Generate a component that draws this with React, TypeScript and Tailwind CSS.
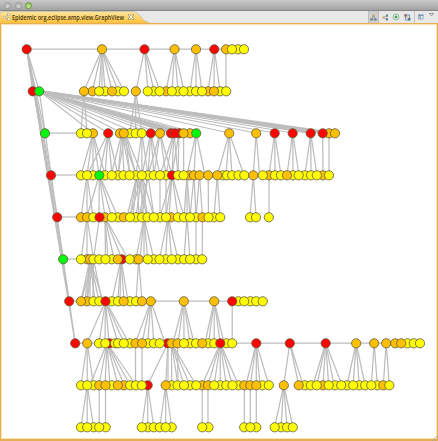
import React from 'react';

type Fill = 'R' | 'G' | 'O' | 'Y';

const FILLS: Record<Fill, string> = {
  R: '#fe0505',
  G: '#05f80b',
  O: '#ffbf05',
  Y: '#fffc05',
};

// Each row is a list of nodes: colour, x, and a trailing "-" for nodes painted below their neighbours.
const ROWS: { y: number; nodes: string }[] = [
  { y: 49, nodes: 'R26.7 O102 R144.5 O174.6 O196 R214.3 O226- Y232 Y238- Y244' },
  { y: 91, nodes: 'R32.7- G39.2 O84 O92.5- Y99.2 Y105- O112 Y117.8- Y124 O135.8 Y147.7 Y153.7- Y159.6 O166- Y171.8 Y177.7- Y183.6 Y189.7- Y196- Y202 O208- O214 Y220- Y226.2' },
  { y: 133, nodes: 'G45 Y81- Y87 O93- R108.2 O120- O123.8 Y130- Y135.6 Y141.8 R150.8 O160 R171- R179- R174.8 O183.6 O190- G196.2 O229.2 O256.2 R274.7 R292.7 R310.7 R322.7 O329- O335-' },
  { y: 175, nodes: 'R51 Y81- Y87 Y93- G99.3 Y105- Y111.8 Y118- Y123.5 Y129.6 Y135.7- Y141.8 Y147.8- Y153.8 Y160 Y166- R172- Y178- Y183.6 O189- O194- O199.5 O208.2 O217.3 Y223- Y227- Y232.2 Y238.5 Y244.3 O253.3 Y262.8 O269- Y275- Y281- O287 Y293- Y298.7 Y305- Y311- Y316.8 O323- Y329' },
  { y: 217, nodes: 'R57.2 O81- O87 Y93.3 R99.5 O105- Y111.8 Y118- O123.7 Y130 Y136- Y142- Y147.5 Y153.8 Y160- O171- Y166 Y178- Y184- Y190 Y196- O202.5- Y208.5 Y214- Y220.2 Y250- Y256 Y268.8' },
  { y: 259, nodes: 'G63.2 Y81 O87- O90- Y93.5- Y99.3 Y105.5 Y111.8- R122- O117.8 Y129.8 Y136- O138.7 Y147.7 Y153.8- Y159.5 Y165.6- Y171.7 Y178- Y184- Y190 Y196- Y202.2-' },
  { y: 301, nodes: 'R69.2 O81 O87- Y93.5- Y99.3 R105.5 Y111.8- Y118- O123.7 Y130- Y136- O142- O150.8 O183.8 O214.2 R232.2 Y238.5- Y244.2 Y250.5- Y256.2- Y262.8' },
  { y: 343, nodes: 'R75.2 O87.2 Y99- R109.5- Y105.3 Y115- Y118- Y123.8 Y130- O135.5- O142 Y147.7- Y153.8- Y159.7 R167.5- O171.5- O177.5- Y184 Y190- Y196- O202.2 Y208.5- Y214.2- R220.3 Y226.5- Y232.2 R256.3 R289.8 R325.7 O356.2 O374.2 O386.2 O395.2 O401.2 Y407.5- Y413.8 Y420' },
  { y: 385, nodes: 'Y81- Y87.2 Y93.5- O99.2 O105.5 Y111.8- O117.8 O123.8- Y130- Y135.8- Y141.8 R147.7- O165.7 Y171.7- Y177.5- Y184 Y190- Y196.2 O202.2- O208 Y214.2 Y220.2- Y226.3 Y232.5 Y238.5- O244.3- O250.3 O256.3 Y262.5- Y268.8 O283.8 O298.7 Y305- Y310.8- Y316.7 O323- Y328.7 Y335- Y341.2 Y347- Y353.2 Y359.2- Y365.2- Y371.3 Y377.3- O383.3- Y389.3' },
  { y: 427, nodes: 'Y81- Y87.2 Y93.5- Y99.2 Y105.7- Y141.8 Y147.8- Y153.8- Y159.8- Y165.7 Y171.7- Y202.2 Y208.5- Y244.2- Y250.3 Y256.3- Y274.7 Y281- Y287- Y292.8' },
];

// Child links between row n and row n + 1, written as parent:child,child
const LINKS: string[] = [
  '102:84,92.5,99,102,105,112,118,124 144.5:136,148,154,160 174.6:166,172,178,184 196:190,196,202 214.3:208,214,220 226:226',
  '84:81,87 135.8:130,135.6,141.8',
  '93:81,87,93,99,105 108.2:87,99,105,112,118 122:111,118,124,130,136 125:118,130,136,142 141.8:136,142,148 150.8:142,148,154,160 160:148,154,166,172 174:160,166,172,178 179:172,178 183.6:183.6 196.2:187,194,205 229.2:217.5,226,232,244 256.2:253.3,259.5 274.7:269,275,281 292.7:287,293,299 310.7:305,311,317 322.7:323 329:329',
  '87:81,87,93 99.3:87,99,105,111.8,118 137:127,130,133,139,147 141.8:130,136,142,147.5,154 148:139,142,154 160:160 172:160,166,169,178,184 166:166 187:184,187,190 194:190,196 199.5:196,202.5 208.2:208.5 217.3:214,220 253.3:250,256 269:269',
  '87:81,87,93.5 99.5:93.5 105:105.5,108,114,122,128 144:136,140,144,147.7,153.8 168:159.5,165.6,171.7,178 187:184,190 196:196 202.5:202.2',
  '90:81,85,87,90,95,99,103 93.5:81,87,93,102 121:111.8,117.8,120,124,128 138.7:136,142',
  '105.5:87.2,99,105,109,118,124,129 150.8:135.5,142,147.7,153.8,165 183.8:173,178,184,190,194 214.2:205,208.5,214.2,220.3,224 232.2:232.2',
  '87.2:81,87.2,93.5 107:90,99,105,110,118,124,130,136 135.5:135.5 142:142 168:147.7,165.7,168 171.5:171.7,178,184,190,196 177.5:178 220.3:202.2,208,214.2,220.2,226.3,232.5,238.5 256.3:246,250.3,256.3,260,268.8 289.8:283.8,298.7,303 325.7:313,317,323,328.7,334,342 356.2:347,353.2,359.2,365 374.2:371.3,377.3 386.2:383.3,389.3',
  '87.2:81,87.2,93.5 99.2:99.2 105.5:105.5 147.7:141.8,147.7,153.8 165.7:159.8,165.7,171.7 202.2:202.2 208:208 244.3:244.3 250.3:250.3 256.3:256.3 283.8:274.7,281,287,292.8',
];

// Horizontal connectors that join siblings
const CHAINS: [number, number, number][] = [
  [26.7, 49, 244],
  [45, 133, 93],
  [51, 175, 81],
  [57, 217, 81],
  [63, 259, 81],
  [69, 301, 262],
  [75, 343, 420],
];

const LEADERS: [number, number][] = [
  [32.7, 91], [39.2, 91], [45, 133], [51, 175], [57.2, 217], [63.2, 259], [69.2, 301], [75.2, 343],
];

const THIN_FAN = [93, 108.2, 122, 136, 150.8, 160, 190, 196.2, 229.2, 256.2, 274.7, 292.7];
const WIDE_FAN = [171, 175, 180, 183.6, 310.7, 322.7, 329, 335];

function Links() {
  return (
    <g stroke="#bdbdbd" strokeWidth="1.25" fill="none">
      {LEADERS.map(([x, y], i) => (
        <path key={i} d={`M26.7 49L${x} ${y}`} />
      ))}
      <path d="M39.2 91L75.2 343" />
      {THIN_FAN.map((x) => (
        <path key={x} strokeWidth="1.1" d={`M39.2 91L${x} 133`} />
      ))}
      {WIDE_FAN.map((x) => (
        <path key={x} strokeWidth="2" d={`M39.2 91L${x} 133`} />
      ))}
      {CHAINS.map(([x, y, end], i) => (
        <path key={i} d={`M${x} ${y}H${end}`} />
      ))}
      {LINKS.map((row, i) =>
        row.split(' ').map((group) => {
          const [from, to] = group.split(':');
          return to.split(',').map((x) => (
            <path key={`${group}-${x}`} d={`M${from} ${49 + i * 42}L${x} ${91 + i * 42}`} />
          ));
        }),
      )}
    </g>
  );
}

function Nodes() {
  return (
    <g stroke="#5e5a38" strokeWidth="0.8">
      {ROWS.map(({ y, nodes }) => {
        const list = nodes.split(' ');
        const ordered = [...list.filter((n) => n.endsWith('-')), ...list.filter((n) => !n.endsWith('-'))];
        return ordered.map((n) => (
          <circle key={`${y}-${n}`} cx={parseFloat(n.slice(1))} cy={y + 0.3} r="4.6" fill={FILLS[n[0] as Fill]} />
        ));
      })}
    </g>
  );
}

function Light({ active = false }: { active?: boolean }) {
  return (
    <span
      className={
        active
          ? 'size-[7px] rounded-full border border-[#6a9440] bg-linear-to-b from-[#8fc060] to-[#c8f58a]'
          : 'size-[7px] rounded-full border border-[#9a9a9a] bg-linear-to-b from-[#b4b4b4] to-[#d8d8d8]'
      }
    />
  );
}

function Toolbar() {
  return (
    <div className="ml-auto flex h-full items-center">
      <div className="flex h-full w-[11px] items-center justify-center border-x border-[#bcbcbc] bg-[#cfcfcf]">
        <svg className="size-[7px]" viewBox="0 0 7 7">
          <path d="M3.5 2L1.3 5.5M3.5 2L5.7 5.5M1 5.7H6" stroke="#787e83" strokeWidth=".8" />
          <rect x="2.5" y=".5" width="2" height="2" fill="#c49c5b" />
          <rect x=".3" y="4.5" width="2" height="2" fill="#65877a" />
          <rect x="4.6" y="4.5" width="2" height="2" fill="#5f7794" />
        </svg>
      </div>
      <svg className="ml-[3px] size-[7px]" viewBox="0 0 7 7">
        <path d="M1.5 3.5L5 1.3M1.5 3.5L5 5.8" stroke="#888" strokeWidth=".7" />
        <rect x=".3" y="2.5" width="2" height="2" fill="#c5a268" />
        <rect x="4" y=".5" width="2" height="2.2" fill="#558b69" />
        <rect x="4" y="4.2" width="2" height="2.2" fill="#607b9b" />
      </svg>
      <svg className="ml-[3px] size-[8px]" viewBox="0 0 8 8">
        <circle cx="4" cy="4" r="3" fill="#e7f0e7" stroke="#7db08b" strokeWidth=".8" />
        <circle cx="4" cy="4" r="1.4" fill="#4b9b61" />
      </svg>
      <svg className="ml-[4px] size-[7px]" viewBox="0 0 7 7">
        <path d="M2 1H5.5V4M5 6H1.5V3" fill="none" stroke="#557fae" strokeWidth=".8" />
        <rect x=".3" y=".3" width="2.2" height="2.4" fill="#8a5c50" />
        <rect x="4.2" y="4" width="2.3" height="2.5" fill="#4b6b91" />
        <rect x="2.5" y="2.5" width="1.8" height="1.8" fill="#e2b98c" />
      </svg>
      <span className="ml-[3px] h-full w-px bg-[#c2c2c2]" />
      <svg className="ml-[3px] size-[6px]" viewBox="0 0 6 6">
        <rect x=".5" y=".8" width="4.6" height="4.2" fill="#dfe8ef" stroke="#7e95aa" strokeWidth=".6" />
        <path d="M.3 1.3H5.3M2 1.3V5" stroke="#537699" strokeWidth=".8" />
      </svg>
      <svg className="mr-[4px] mb-[4px] ml-[5px] h-[4px] w-[5px]" viewBox="0 0 5 4">
        <path d="M.4 .5H4.6L2.5 2.8Z" fill="#fff" stroke="#555" strokeWidth=".6" />
      </svg>
    </div>
  );
}

function TabBar() {
  return (
    <div className="flex h-[12px] w-full items-center bg-[#e8e8e8]">
      <div className="relative h-full w-[150px]">
        <svg className="absolute inset-0 h-[12px] w-[150px]" viewBox="0 0 150 12">
          <defs>
            <linearGradient id="tab" x1="0" y1="0" x2="0" y2="1">
              <stop offset="0" stopColor="#ffe6a0" />
              <stop offset="1" stopColor="#fdc13a" />
            </linearGradient>
          </defs>
          <path d="M0 12V3Q0 .5 3 .5H132C140 .5 141 10.5 149 11.5V12Z" fill="url(#tab)" />
          <path d="M0 3Q0 .5 3 .5H132C140 .5 141 10.5 149 11.5" fill="none" stroke="#b9b6a8" strokeWidth=".7" />
        </svg>
        <div className="relative flex h-full items-center pl-[3px]">
          <svg className="size-[8px]" viewBox="0 0 8 8">
            <path d="M1.5 4.5L5.5 1.7M1.5 4.5L5.5 6.3" stroke="#a9a28f" strokeWidth=".8" />
            <g fill="#f8f4e8" stroke="#aaa491" strokeWidth=".5">
              <rect x=".4" y="3.3" width="2.3" height="2.3" />
              <rect x="4.7" y=".5" width="2.3" height="2.3" />
              <rect x="4.7" y="5" width="2.3" height="2.3" />
            </g>
          </svg>
          <svg className="ml-[1px] h-[12px] w-[114px] overflow-visible" viewBox="0 0 114 12">
            <text
              x="0"
              y="8.5"
              textLength="112"
              lengthAdjust="spacingAndGlyphs"
              className="fill-[#3d3412] font-['Open_Sans','Noto_Sans',sans-serif] text-[6.8px] font-semibold"
            >
              Epidemic org.eclipse.amp.view.GraphView
            </text>
          </svg>
          <svg className="ml-[2px] size-[6px]" viewBox="0 0 6 6">
            <path
              d="M.5 .5H1.7L3 1.8L4.3 .5H5.5V1.7L4.2 3L5.5 4.3V5.5H4.3L3 4.2L1.7 5.5H.5V4.3L1.8 3L.5 1.7Z"
              fill="#fff6dc"
              stroke="#766c4c"
              strokeWidth=".6"
            />
          </svg>
        </div>
      </div>
      <Toolbar />
    </div>
  );
}

export default function App() {
  return (
    <div className="flex h-[441px] w-[438px] flex-col bg-white">
      <header className="flex h-[11px] shrink-0 items-center gap-[3.5px] border-b border-[#858585] bg-linear-to-b from-[#c9c9c9] to-[#a2a2a2] pl-[4px]">
        <Light />
        <Light />
        <Light active />
      </header>
      <TabBar />
      <main className="relative flex-1 border-x border-t border-b-2 border-[#e5ae50] bg-white shadow-[inset_0_0_0_1px_#fbe2b0]">
        <svg className="absolute -top-[24px] -left-px h-[441px] w-[438px]" viewBox="0 0 438 441">
          <Links />
          <Nodes />
          <path d="M438 435L432 441M438 438L435 441" stroke="#a7a39a" strokeWidth=".8" />
        </svg>
      </main>
    </div>
  );
}
